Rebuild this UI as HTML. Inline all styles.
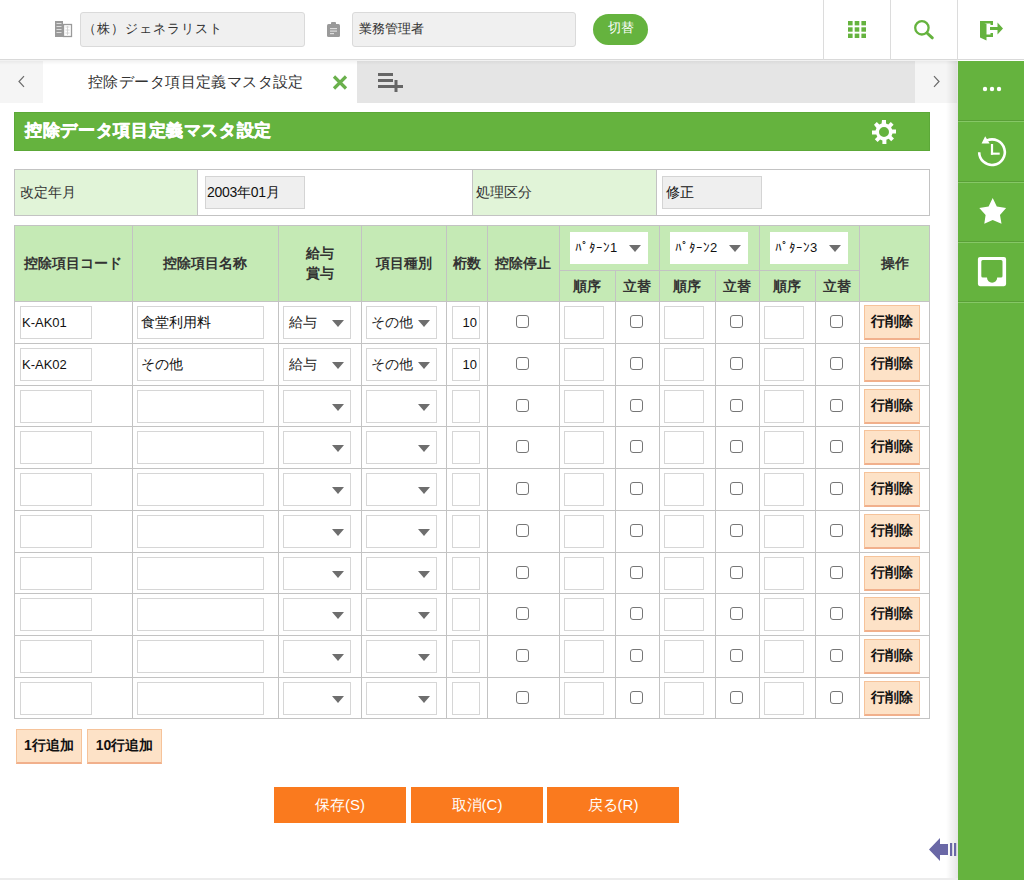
<!DOCTYPE html><html><head><meta charset="utf-8"><style>
*{box-sizing:border-box;margin:0;padding:0}
html,body{width:1024px;height:880px;overflow:hidden;background:#fff}
body{position:relative;font-family:"Liberation Sans",sans-serif;color:#333}
.a{position:absolute}
.hin{position:absolute;background:#f0f0f0;border:1px solid #dadada;border-radius:3px;font-size:13px;color:#333;line-height:32px;padding-left:8px}
.hc{position:absolute;background:#c5eab5;color:#333;font-weight:bold;font-size:14px;display:flex;align-items:center;justify-content:center;text-align:center;line-height:20px}
.vl{position:absolute;width:1px;background:#c3c3c3}
.hl{position:absolute;height:1px;background:#c3c3c3}
.inp{position:absolute;background:#fff;border:1px solid #d6d6d6}
.sel{position:absolute;background:#fff;border:1px solid #d6d6d6;font-size:14px;color:#222;line-height:30px;padding-left:5px}
.tri{position:absolute;width:0;height:0;border-left:6px solid transparent;border-right:6px solid transparent;border-top:7px solid #6e6e6e}
.cb{position:absolute;width:13px;height:13px;border:1px solid #767676;border-radius:3px;background:#fff}
.btn{position:absolute;background:#fde2c7;border:1px solid #f6c39a;border-bottom:2px solid #f1b08c;font-weight:bold;font-size:14px;color:#111;display:flex;align-items:center;justify-content:center}
.ob{position:absolute;background:#fa7a1e;color:#fff;font-size:15px;display:flex;align-items:center;justify-content:center}
</style></head><body><div class="a" style="left:0;top:0;width:1024px;height:60px;background:#fff;border-bottom:1px solid #d9d9d9"></div>
<svg class="a" style="left:55px;top:21px" width="18" height="17" viewBox="0 0 18 17"><rect x="0" y="0" width="8" height="16" fill="#9a9a9a"/><rect x="1.5" y="2" width="5" height="1" fill="#ddd"/><rect x="1.5" y="5" width="5" height="1" fill="#ddd"/><rect x="1.5" y="8" width="5" height="1" fill="#ddd"/><rect x="1.5" y="11" width="5" height="1" fill="#ddd"/><rect x="8.5" y="3.5" width="8" height="12" fill="#fff" stroke="#9a9a9a" stroke-width="1.3"/><path d="M10.5 6h4M10.5 9h4M10.5 12h4M12.5 5v9" stroke="#ccc" stroke-width="0.8"/></svg>
<div class="hin" style="left:80px;top:12px;width:225px;height:35px;padding-left:2px;letter-spacing:1px">（株）ジェネラリスト</div>
<svg class="a" style="left:327px;top:22px" width="14" height="15" viewBox="0 0 14 15"><rect x="0" y="2" width="13" height="13" rx="1.5" fill="#9a9a9a"/><rect x="4" y="0" width="5" height="3.5" rx="1" fill="#9a9a9a"/><rect x="3" y="6" width="7" height="1.2" fill="#ddd"/><rect x="3" y="8.5" width="7" height="1.2" fill="#ddd"/><rect x="3" y="11" width="4" height="1.2" fill="#ddd"/></svg>
<div class="hin" style="left:352px;top:12px;width:224px;height:35px;padding-left:6px">業務管理者</div>
<div class="a" style="left:593px;top:14px;width:55px;height:31px;border-radius:16px;background:#65b33e;color:#fff;font-size:13px;line-height:28px;text-align:center">切替</div>
<div class="vl" style="left:823px;top:0;height:60px;background:#dcdcdc"></div>
<div class="vl" style="left:890px;top:0;height:60px;background:#dcdcdc"></div>
<div class="vl" style="left:957px;top:0;height:60px;background:#dcdcdc"></div>
<svg class="a" style="left:848px;top:21px" width="18" height="17" viewBox="0 0 18 17"><rect x="0.0" y="0.0" width="4.6" height="4.4" fill="#65b33e"/><rect x="6.7" y="0.0" width="4.6" height="4.4" fill="#65b33e"/><rect x="13.4" y="0.0" width="4.6" height="4.4" fill="#65b33e"/><rect x="0.0" y="6.3" width="4.6" height="4.4" fill="#65b33e"/><rect x="6.7" y="6.3" width="4.6" height="4.4" fill="#65b33e"/><rect x="13.4" y="6.3" width="4.6" height="4.4" fill="#65b33e"/><rect x="0.0" y="12.6" width="4.6" height="4.4" fill="#65b33e"/><rect x="6.7" y="12.6" width="4.6" height="4.4" fill="#65b33e"/><rect x="13.4" y="12.6" width="4.6" height="4.4" fill="#65b33e"/></svg>
<svg class="a" style="left:912px;top:18px" width="24" height="24" viewBox="0 0 24 24"><circle cx="9.9" cy="9.8" r="6.7" fill="none" stroke="#65b33e" stroke-width="2.3"/><line x1="15" y1="15" x2="20.3" y2="19.8" stroke="#65b33e" stroke-width="3" stroke-linecap="round"/></svg>
<svg class="a" style="left:972px;top:14px" width="40" height="32" viewBox="0 0 40 32"><path d="M8 7h13v4h-2.5v-1.6h-10.5z" fill="#65b33e"/><path d="M14 23h7v-4h-2.5v1.6h-4.5z" fill="#65b33e"/><path d="M8 7l6.5 3v16.6l-6.5-3z" fill="#65b33e"/><path d="M18 13h7.5v-4.5l5.5 6-5.5 6v-4.5h-7.5z" fill="#65b33e"/></svg>
<div class="a" style="left:0;top:61px;width:957px;height:42px;background:#e5e5e5"></div>
<div class="a" style="left:0;top:61px;width:43px;height:42px;background:#f5f5f5"></div>
<svg class="a" style="left:17px;top:75px" width="9" height="13" viewBox="0 0 9 13"><path d="M7 1.2L2 6.5l5 5.3" fill="none" stroke="#6a6a6a" stroke-width="1.2"/></svg>
<div class="a" style="left:915px;top:61px;width:42px;height:42px;background:#f5f5f5"></div>
<svg class="a" style="left:932px;top:75px" width="9" height="13" viewBox="0 0 9 13"><path d="M2 1.2L7 6.5l-5 5.3" fill="none" stroke="#6a6a6a" stroke-width="1.2"/></svg>
<div class="a" style="left:43px;top:61px;width:314px;height:42px;background:#fff"></div>
<div class="a" style="left:88px;top:71px;font-size:15px;letter-spacing:0.42px;color:#333;line-height:22px;white-space:nowrap">控除データ項目定義マスタ設定</div>
<svg class="a" style="left:332px;top:75px" width="16" height="15" viewBox="0 0 16 15"><path d="M2 1.5l12 12M14 1.5l-12 12" stroke="#6ab04c" stroke-width="3.2"/></svg>
<svg class="a" style="left:377px;top:72px" width="27" height="21" viewBox="0 0 27 21"><rect x="1" y="1" width="15" height="3" fill="#666"/><rect x="1" y="7" width="15" height="3" fill="#666"/><rect x="1" y="13" width="11" height="3" fill="#666"/><rect x="12" y="13" width="14" height="3" fill="#666"/><rect x="17.5" y="8" width="3" height="12" fill="#666"/></svg>
<div class="a" style="left:0;top:60px;width:958px;height:5px;background:linear-gradient(to bottom,rgba(0,0,0,0.06),rgba(0,0,0,0))"></div>
<div class="a" style="left:946px;top:61px;width:12px;height:819px;background:linear-gradient(to right,rgba(0,0,0,0),rgba(0,0,0,0.10))"></div>
<div class="a" style="left:958px;top:61px;width:66px;height:819px;background:#65b33e"></div>
<div class="hl" style="left:958px;top:120px;width:66px;background:#5a9f37"></div>
<div class="hl" style="left:958px;top:121px;width:66px;background:#86c766"></div>
<div class="hl" style="left:958px;top:181px;width:66px;background:#5a9f37"></div>
<div class="hl" style="left:958px;top:182px;width:66px;background:#86c766"></div>
<div class="hl" style="left:958px;top:241px;width:66px;background:#5a9f37"></div>
<div class="hl" style="left:958px;top:242px;width:66px;background:#86c766"></div>
<div class="hl" style="left:958px;top:301px;width:66px;background:#5a9f37"></div>
<div class="hl" style="left:958px;top:302px;width:66px;background:#86c766"></div>
<svg class="a" style="left:982px;top:85px" width="20" height="8" viewBox="0 0 20 8"><circle cx="3" cy="4" r="2.2" fill="#fff"/><circle cx="10" cy="4" r="2.2" fill="#fff"/><circle cx="17" cy="4" r="2.2" fill="#fff"/></svg>
<svg class="a" style="left:972px;top:132px" width="40" height="40" viewBox="0 0 40 40"><path d="M7.2 20.2A12.8 12.8 0 1 0 15.0 8.4" fill="none" stroke="#fff" stroke-width="2.6"/><path d="M13.2 4.3L9.6 11.5L17.6 11.6z" fill="#fff"/><rect x="18.9" y="12" width="2.2" height="10.7" fill="#fff"/><rect x="18.9" y="20.6" width="8.8" height="2.1" fill="#fff"/></svg>
<svg class="a" style="left:972px;top:192px" width="40" height="40" viewBox="0 0 40 40"><path d="M20.7 5.9L24.8 14.5L34.1 16.1L28 23L29.5 31.8L20.7 28L12.3 31.8L13.6 23L7.3 16.1L16.6 14.5z" fill="#fff"/></svg>
<svg class="a" style="left:972px;top:251px" width="40" height="40" viewBox="0 0 40 40"><path fill="#fff" fill-rule="evenodd" d="M8 5.9h24a2.1 2.1 0 0 1 2.1 2.1v25.1a2.1 2.1 0 0 1-2.1 2.1h-24a2.1 2.1 0 0 1-2.1-2.1v-25.1a2.1 2.1 0 0 1 2.1-2.1zM10.8 9.1a1.5 1.5 0 0 0-1.5 1.5v14.5a1.5 1.5 0 0 0 1.5 1.5h4.2a5.1 5.1 0 0 0 10.2 0h3.8a1.5 1.5 0 0 0 1.5-1.5v-14.5a1.5 1.5 0 0 0-1.5-1.5z"/></svg>
<div class="a" style="left:14px;top:112px;width:916px;height:39px;background:#65b33e;border:1px solid #5ca838"></div>
<div class="a" style="left:25px;top:119px;font-size:17px;letter-spacing:0.65px;font-weight:bold;-webkit-text-stroke:0.5px #fff;color:#fff;line-height:24px;white-space:nowrap">控除データ項目定義マスタ設定</div>
<svg class="a" style="left:872px;top:120px" width="24" height="24" viewBox="0 0 24 24"><path fill="#fff" fill-rule="evenodd" d="M10 0h4v3.5l2.3 1 2.5-2.5 2.8 2.8-2.5 2.5 1 2.3H24v4h-3.5l-1 2.3 2.5 2.5-2.8 2.8-2.5-2.5-2.3 1V24h-4v-3.5l-2.3-1-2.5 2.5-2.8-2.8 2.5-2.5-1-2.3H0v-4h3.5l1-2.3L2 4.8 4.8 2l2.5 2.5 2.3-1zM12 7a5 5 0 1 0 0 10a5 5 0 1 0 0-10z"/></svg>
<div class="a" style="left:14px;top:169px;width:916px;height:47px;border:1px solid #c3c3c3;background:#fff"></div>
<div class="a" style="left:15px;top:170px;width:182px;height:45px;background:#e1f4d8"></div>
<div class="vl" style="left:197px;top:170px;height:45px"></div>
<div class="a" style="left:473px;top:170px;width:183px;height:45px;background:#e1f4d8"></div>
<div class="vl" style="left:472px;top:170px;height:45px"></div>
<div class="vl" style="left:656px;top:170px;height:45px"></div>
<div class="a" style="left:20px;top:181px;font-size:14px;line-height:22px;color:#333">改定年月</div>
<div class="a" style="left:476px;top:181px;font-size:14px;line-height:22px;color:#333">処理区分</div>
<div class="a" style="left:205px;top:176px;width:100px;height:33px;background:#efefef;border:1px solid #d4d4d4;font-size:14px;line-height:31px;padding-left:1px;letter-spacing:-0.3px;color:#111">2003年01月</div>
<div class="a" style="left:662px;top:176px;width:100px;height:33px;background:#efefef;border:1px solid #d4d4d4;font-size:14px;line-height:31px;padding-left:3px;color:#111">修正</div>
<div class="a" style="left:14px;top:225px;width:916px;height:76px;background:#c5eab5"></div>
<div class="hc" style="left:14px;top:225px;width:118px;height:76px">控除項目コード</div>
<div class="hc" style="left:132px;top:225px;width:146px;height:76px">控除項目名称</div>
<div class="hc" style="left:278px;top:225px;width:83px;height:76px">給与<br>賞与</div>
<div class="hc" style="left:361px;top:225px;width:85px;height:76px">項目種別</div>
<div class="hc" style="left:446px;top:225px;width:41px;height:76px">桁数</div>
<div class="hc" style="left:487px;top:225px;width:72px;height:76px">控除停止</div>
<div class="hc" style="left:859px;top:225px;width:71px;height:76px">操作</div>
<div class="hc" style="left:559px;top:270px;width:56px;height:31px">順序</div>
<div class="hc" style="left:615px;top:270px;width:44px;height:31px">立替</div>
<div class="hl" style="left:559px;top:270px;width:100px"></div>
<div class="a" style="left:570px;top:232px;width:78px;height:32px;background:#fff;font-size:13px;line-height:32px;padding-left:5px;color:#111">ﾊﾟﾀｰﾝ1</div>
<div class="tri" style="left:629px;top:245px"></div>
<div class="hc" style="left:659px;top:270px;width:56px;height:31px">順序</div>
<div class="hc" style="left:715px;top:270px;width:44px;height:31px">立替</div>
<div class="hl" style="left:659px;top:270px;width:100px"></div>
<div class="a" style="left:670px;top:232px;width:78px;height:32px;background:#fff;font-size:13px;line-height:32px;padding-left:5px;color:#111">ﾊﾟﾀｰﾝ2</div>
<div class="tri" style="left:729px;top:245px"></div>
<div class="hc" style="left:759px;top:270px;width:56px;height:31px">順序</div>
<div class="hc" style="left:815px;top:270px;width:44px;height:31px">立替</div>
<div class="hl" style="left:759px;top:270px;width:100px"></div>
<div class="a" style="left:770px;top:232px;width:78px;height:32px;background:#fff;font-size:13px;line-height:32px;padding-left:5px;color:#111">ﾊﾟﾀｰﾝ3</div>
<div class="tri" style="left:829px;top:245px"></div>
<div class="vl" style="left:132px;top:225px;height:493px"></div>
<div class="vl" style="left:278px;top:225px;height:493px"></div>
<div class="vl" style="left:361px;top:225px;height:493px"></div>
<div class="vl" style="left:446px;top:225px;height:493px"></div>
<div class="vl" style="left:487px;top:225px;height:493px"></div>
<div class="vl" style="left:559px;top:225px;height:493px"></div>
<div class="vl" style="left:615px;top:270px;height:448px"></div>
<div class="vl" style="left:659px;top:225px;height:493px"></div>
<div class="vl" style="left:715px;top:270px;height:448px"></div>
<div class="vl" style="left:759px;top:225px;height:493px"></div>
<div class="vl" style="left:815px;top:270px;height:448px"></div>
<div class="vl" style="left:859px;top:225px;height:493px"></div>
<div class="hl" style="left:14px;top:301px;width:916px"></div>
<div class="hl" style="left:14px;top:343px;width:916px"></div>
<div class="hl" style="left:14px;top:385px;width:916px"></div>
<div class="hl" style="left:14px;top:426px;width:916px"></div>
<div class="hl" style="left:14px;top:468px;width:916px"></div>
<div class="hl" style="left:14px;top:510px;width:916px"></div>
<div class="hl" style="left:14px;top:552px;width:916px"></div>
<div class="hl" style="left:14px;top:593px;width:916px"></div>
<div class="hl" style="left:14px;top:635px;width:916px"></div>
<div class="hl" style="left:14px;top:677px;width:916px"></div>
<div class="a" style="left:14px;top:225px;width:916px;height:494px;border:1px solid #c3c3c3"></div>
<div class="inp" style="left:20px;top:306px;width:72px;height:33px;font-size:13px;line-height:31px;padding-left:1px;color:#111">K-AK01</div>
<div class="inp" style="left:137px;top:306px;width:127px;height:33px;font-size:14px;line-height:31px;padding-left:3px;color:#111">食堂利用料</div>
<div class="sel" style="left:283px;top:306px;width:68px;height:33px">給与</div>
<div class="tri" style="left:332px;top:320px"></div>
<div class="sel" style="left:366px;top:306px;width:71px;height:33px;padding-left:4px">その他</div>
<div class="tri" style="left:418px;top:320px"></div>
<div class="inp" style="left:452px;top:306px;width:28px;height:33px;font-size:13px;line-height:31px;text-align:right;padding-right:2px;color:#111">10</div>
<div class="cb" style="left:516px;top:315px"></div>
<div class="inp" style="left:564px;top:306px;width:40px;height:33px"></div>
<div class="cb" style="left:630px;top:315px"></div>
<div class="inp" style="left:664px;top:306px;width:40px;height:33px"></div>
<div class="cb" style="left:730px;top:315px"></div>
<div class="inp" style="left:764px;top:306px;width:40px;height:33px"></div>
<div class="cb" style="left:830px;top:315px"></div>
<div class="btn" style="left:864px;top:305px;width:56px;height:35px">行削除</div>
<div class="inp" style="left:20px;top:348px;width:72px;height:33px;font-size:13px;line-height:31px;padding-left:1px;color:#111">K-AK02</div>
<div class="inp" style="left:137px;top:348px;width:127px;height:33px;font-size:14px;line-height:31px;padding-left:3px;color:#111">その他</div>
<div class="sel" style="left:283px;top:348px;width:68px;height:33px">給与</div>
<div class="tri" style="left:332px;top:362px"></div>
<div class="sel" style="left:366px;top:348px;width:71px;height:33px;padding-left:4px">その他</div>
<div class="tri" style="left:418px;top:362px"></div>
<div class="inp" style="left:452px;top:348px;width:28px;height:33px;font-size:13px;line-height:31px;text-align:right;padding-right:2px;color:#111">10</div>
<div class="cb" style="left:516px;top:357px"></div>
<div class="inp" style="left:564px;top:348px;width:40px;height:33px"></div>
<div class="cb" style="left:630px;top:357px"></div>
<div class="inp" style="left:664px;top:348px;width:40px;height:33px"></div>
<div class="cb" style="left:730px;top:357px"></div>
<div class="inp" style="left:764px;top:348px;width:40px;height:33px"></div>
<div class="cb" style="left:830px;top:357px"></div>
<div class="btn" style="left:864px;top:347px;width:56px;height:35px">行削除</div>
<div class="inp" style="left:20px;top:390px;width:72px;height:33px;font-size:13px;line-height:31px;padding-left:1px;color:#111"></div>
<div class="inp" style="left:137px;top:390px;width:127px;height:33px;font-size:14px;line-height:31px;padding-left:3px;color:#111"></div>
<div class="sel" style="left:283px;top:390px;width:68px;height:33px"></div>
<div class="tri" style="left:332px;top:404px"></div>
<div class="sel" style="left:366px;top:390px;width:71px;height:33px;padding-left:4px"></div>
<div class="tri" style="left:418px;top:404px"></div>
<div class="inp" style="left:452px;top:390px;width:28px;height:33px;font-size:13px;line-height:31px;text-align:right;padding-right:2px;color:#111"></div>
<div class="cb" style="left:516px;top:399px"></div>
<div class="inp" style="left:564px;top:390px;width:40px;height:33px"></div>
<div class="cb" style="left:630px;top:399px"></div>
<div class="inp" style="left:664px;top:390px;width:40px;height:33px"></div>
<div class="cb" style="left:730px;top:399px"></div>
<div class="inp" style="left:764px;top:390px;width:40px;height:33px"></div>
<div class="cb" style="left:830px;top:399px"></div>
<div class="btn" style="left:864px;top:389px;width:56px;height:35px">行削除</div>
<div class="inp" style="left:20px;top:431px;width:72px;height:33px;font-size:13px;line-height:31px;padding-left:1px;color:#111"></div>
<div class="inp" style="left:137px;top:431px;width:127px;height:33px;font-size:14px;line-height:31px;padding-left:3px;color:#111"></div>
<div class="sel" style="left:283px;top:431px;width:68px;height:33px"></div>
<div class="tri" style="left:332px;top:445px"></div>
<div class="sel" style="left:366px;top:431px;width:71px;height:33px;padding-left:4px"></div>
<div class="tri" style="left:418px;top:445px"></div>
<div class="inp" style="left:452px;top:431px;width:28px;height:33px;font-size:13px;line-height:31px;text-align:right;padding-right:2px;color:#111"></div>
<div class="cb" style="left:516px;top:440px"></div>
<div class="inp" style="left:564px;top:431px;width:40px;height:33px"></div>
<div class="cb" style="left:630px;top:440px"></div>
<div class="inp" style="left:664px;top:431px;width:40px;height:33px"></div>
<div class="cb" style="left:730px;top:440px"></div>
<div class="inp" style="left:764px;top:431px;width:40px;height:33px"></div>
<div class="cb" style="left:830px;top:440px"></div>
<div class="btn" style="left:864px;top:430px;width:56px;height:35px">行削除</div>
<div class="inp" style="left:20px;top:473px;width:72px;height:33px;font-size:13px;line-height:31px;padding-left:1px;color:#111"></div>
<div class="inp" style="left:137px;top:473px;width:127px;height:33px;font-size:14px;line-height:31px;padding-left:3px;color:#111"></div>
<div class="sel" style="left:283px;top:473px;width:68px;height:33px"></div>
<div class="tri" style="left:332px;top:487px"></div>
<div class="sel" style="left:366px;top:473px;width:71px;height:33px;padding-left:4px"></div>
<div class="tri" style="left:418px;top:487px"></div>
<div class="inp" style="left:452px;top:473px;width:28px;height:33px;font-size:13px;line-height:31px;text-align:right;padding-right:2px;color:#111"></div>
<div class="cb" style="left:516px;top:482px"></div>
<div class="inp" style="left:564px;top:473px;width:40px;height:33px"></div>
<div class="cb" style="left:630px;top:482px"></div>
<div class="inp" style="left:664px;top:473px;width:40px;height:33px"></div>
<div class="cb" style="left:730px;top:482px"></div>
<div class="inp" style="left:764px;top:473px;width:40px;height:33px"></div>
<div class="cb" style="left:830px;top:482px"></div>
<div class="btn" style="left:864px;top:472px;width:56px;height:35px">行削除</div>
<div class="inp" style="left:20px;top:515px;width:72px;height:33px;font-size:13px;line-height:31px;padding-left:1px;color:#111"></div>
<div class="inp" style="left:137px;top:515px;width:127px;height:33px;font-size:14px;line-height:31px;padding-left:3px;color:#111"></div>
<div class="sel" style="left:283px;top:515px;width:68px;height:33px"></div>
<div class="tri" style="left:332px;top:529px"></div>
<div class="sel" style="left:366px;top:515px;width:71px;height:33px;padding-left:4px"></div>
<div class="tri" style="left:418px;top:529px"></div>
<div class="inp" style="left:452px;top:515px;width:28px;height:33px;font-size:13px;line-height:31px;text-align:right;padding-right:2px;color:#111"></div>
<div class="cb" style="left:516px;top:524px"></div>
<div class="inp" style="left:564px;top:515px;width:40px;height:33px"></div>
<div class="cb" style="left:630px;top:524px"></div>
<div class="inp" style="left:664px;top:515px;width:40px;height:33px"></div>
<div class="cb" style="left:730px;top:524px"></div>
<div class="inp" style="left:764px;top:515px;width:40px;height:33px"></div>
<div class="cb" style="left:830px;top:524px"></div>
<div class="btn" style="left:864px;top:514px;width:56px;height:35px">行削除</div>
<div class="inp" style="left:20px;top:557px;width:72px;height:33px;font-size:13px;line-height:31px;padding-left:1px;color:#111"></div>
<div class="inp" style="left:137px;top:557px;width:127px;height:33px;font-size:14px;line-height:31px;padding-left:3px;color:#111"></div>
<div class="sel" style="left:283px;top:557px;width:68px;height:33px"></div>
<div class="tri" style="left:332px;top:571px"></div>
<div class="sel" style="left:366px;top:557px;width:71px;height:33px;padding-left:4px"></div>
<div class="tri" style="left:418px;top:571px"></div>
<div class="inp" style="left:452px;top:557px;width:28px;height:33px;font-size:13px;line-height:31px;text-align:right;padding-right:2px;color:#111"></div>
<div class="cb" style="left:516px;top:566px"></div>
<div class="inp" style="left:564px;top:557px;width:40px;height:33px"></div>
<div class="cb" style="left:630px;top:566px"></div>
<div class="inp" style="left:664px;top:557px;width:40px;height:33px"></div>
<div class="cb" style="left:730px;top:566px"></div>
<div class="inp" style="left:764px;top:557px;width:40px;height:33px"></div>
<div class="cb" style="left:830px;top:566px"></div>
<div class="btn" style="left:864px;top:556px;width:56px;height:35px">行削除</div>
<div class="inp" style="left:20px;top:598px;width:72px;height:33px;font-size:13px;line-height:31px;padding-left:1px;color:#111"></div>
<div class="inp" style="left:137px;top:598px;width:127px;height:33px;font-size:14px;line-height:31px;padding-left:3px;color:#111"></div>
<div class="sel" style="left:283px;top:598px;width:68px;height:33px"></div>
<div class="tri" style="left:332px;top:612px"></div>
<div class="sel" style="left:366px;top:598px;width:71px;height:33px;padding-left:4px"></div>
<div class="tri" style="left:418px;top:612px"></div>
<div class="inp" style="left:452px;top:598px;width:28px;height:33px;font-size:13px;line-height:31px;text-align:right;padding-right:2px;color:#111"></div>
<div class="cb" style="left:516px;top:607px"></div>
<div class="inp" style="left:564px;top:598px;width:40px;height:33px"></div>
<div class="cb" style="left:630px;top:607px"></div>
<div class="inp" style="left:664px;top:598px;width:40px;height:33px"></div>
<div class="cb" style="left:730px;top:607px"></div>
<div class="inp" style="left:764px;top:598px;width:40px;height:33px"></div>
<div class="cb" style="left:830px;top:607px"></div>
<div class="btn" style="left:864px;top:597px;width:56px;height:35px">行削除</div>
<div class="inp" style="left:20px;top:640px;width:72px;height:33px;font-size:13px;line-height:31px;padding-left:1px;color:#111"></div>
<div class="inp" style="left:137px;top:640px;width:127px;height:33px;font-size:14px;line-height:31px;padding-left:3px;color:#111"></div>
<div class="sel" style="left:283px;top:640px;width:68px;height:33px"></div>
<div class="tri" style="left:332px;top:654px"></div>
<div class="sel" style="left:366px;top:640px;width:71px;height:33px;padding-left:4px"></div>
<div class="tri" style="left:418px;top:654px"></div>
<div class="inp" style="left:452px;top:640px;width:28px;height:33px;font-size:13px;line-height:31px;text-align:right;padding-right:2px;color:#111"></div>
<div class="cb" style="left:516px;top:649px"></div>
<div class="inp" style="left:564px;top:640px;width:40px;height:33px"></div>
<div class="cb" style="left:630px;top:649px"></div>
<div class="inp" style="left:664px;top:640px;width:40px;height:33px"></div>
<div class="cb" style="left:730px;top:649px"></div>
<div class="inp" style="left:764px;top:640px;width:40px;height:33px"></div>
<div class="cb" style="left:830px;top:649px"></div>
<div class="btn" style="left:864px;top:639px;width:56px;height:35px">行削除</div>
<div class="inp" style="left:20px;top:682px;width:72px;height:33px;font-size:13px;line-height:31px;padding-left:1px;color:#111"></div>
<div class="inp" style="left:137px;top:682px;width:127px;height:33px;font-size:14px;line-height:31px;padding-left:3px;color:#111"></div>
<div class="sel" style="left:283px;top:682px;width:68px;height:33px"></div>
<div class="tri" style="left:332px;top:696px"></div>
<div class="sel" style="left:366px;top:682px;width:71px;height:33px;padding-left:4px"></div>
<div class="tri" style="left:418px;top:696px"></div>
<div class="inp" style="left:452px;top:682px;width:28px;height:33px;font-size:13px;line-height:31px;text-align:right;padding-right:2px;color:#111"></div>
<div class="cb" style="left:516px;top:691px"></div>
<div class="inp" style="left:564px;top:682px;width:40px;height:33px"></div>
<div class="cb" style="left:630px;top:691px"></div>
<div class="inp" style="left:664px;top:682px;width:40px;height:33px"></div>
<div class="cb" style="left:730px;top:691px"></div>
<div class="inp" style="left:764px;top:682px;width:40px;height:33px"></div>
<div class="cb" style="left:830px;top:691px"></div>
<div class="btn" style="left:864px;top:681px;width:56px;height:35px">行削除</div>
<div class="btn" style="left:16px;top:729px;width:66px;height:35px">1行追加</div>
<div class="btn" style="left:87px;top:729px;width:75px;height:35px">10行追加</div>
<div class="ob" style="left:274px;top:787px;width:132px;height:36px">保存(S)</div>
<div class="ob" style="left:411px;top:787px;width:132px;height:36px">取消(C)</div>
<div class="ob" style="left:547px;top:787px;width:132px;height:36px">戻る(R)</div>
<svg class="a" style="left:929px;top:838px" width="28" height="23" viewBox="0 0 28 23"><path d="M0 11.5L11 0v6h8v11h-8v6z" fill="#6a68a6"/><rect x="21" y="5" width="2.2" height="13" fill="#6a68a6"/><rect x="25" y="5" width="2.2" height="13" fill="#6a68a6"/></svg>
<div class="a" style="left:0;top:878px;width:958px;height:2px;background:#ececec"></div></body></html>
